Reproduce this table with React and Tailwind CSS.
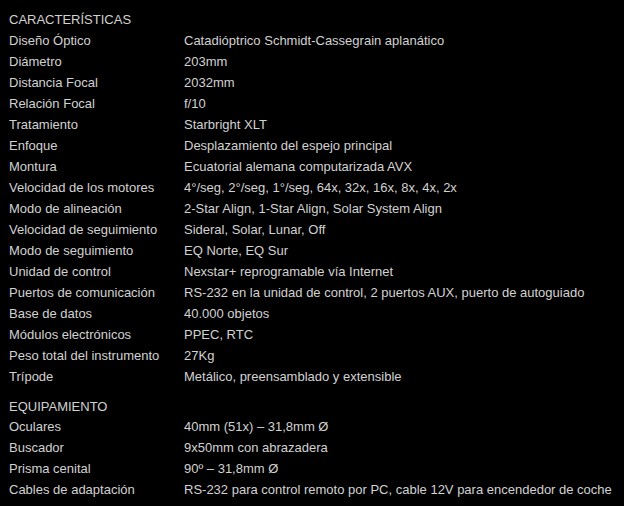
import React from 'react';

const caracteristicas = [
  ['Diseño Óptico', 'Catadióptrico Schmidt-Cassegrain aplanático'],
  ['Diámetro', '203mm'],
  ['Distancia Focal', '2032mm'],
  ['Relación Focal', 'f/10'],
  ['Tratamiento', 'Starbright XLT'],
  ['Enfoque', 'Desplazamiento del espejo principal'],
  ['Montura', 'Ecuatorial alemana computarizada AVX'],
  ['Velocidad de los motores', '4°/seg, 2°/seg, 1°/seg, 64x, 32x, 16x, 8x, 4x, 2x'],
  ['Modo de alineación', '2-Star Align, 1-Star Align, Solar System Align'],
  ['Velocidad de seguimiento', 'Sideral, Solar, Lunar, Off'],
  ['Modo de seguimiento', 'EQ Norte, EQ Sur'],
  ['Unidad de control', 'Nexstar+ reprogramable vía Internet'],
  ['Puertos de comunicación', 'RS-232 en la unidad de control, 2 puertos AUX, puerto de autoguiado'],
  ['Base de datos', '40.000 objetos'],
  ['Módulos electrónicos', 'PPEC, RTC'],
  ['Peso total del instrumento', '27Kg'],
  ['Trípode', 'Metálico, preensamblado y extensible'],
];

const equipamiento = [
  ['Oculares', '40mm (51x) – 31,8mm Ø'],
  ['Buscador', '9x50mm con abrazadera'],
  ['Prisma cenital', '90º – 31,8mm Ø'],
  ['Cables de adaptación', 'RS-232 para control remoto por PC, cable 12V para encendedor de coche'],
];

const Section = ({ title, rows, className = '', titleClass = 'h-[20px]' }) => (
  <div className={className}>
    <div className={`${titleClass} flex items-center`}>{title}</div>
    {rows.map(([k, v]) => (
      <div key={k} className="h-[21px] flex items-center">
        <span className="w-[175px] shrink-0">{k}</span>
        <span className="whitespace-nowrap">{v}</span>
      </div>
    ))}
  </div>
);

export default function App() {
  return (
    <div
      className="w-[624px] h-[506px] bg-black text-[#d2d2d2] text-[13px] leading-none pl-[9px] pt-[9px] overflow-hidden"
      style={{ fontFamily: '"Liberation Sans", Arial, sans-serif' }}
    >
      <Section title="CARACTERÍSTICAS" rows={caracteristicas} titleClass="h-[21px]" />
      <Section title="EQUIPAMIENTO" rows={equipamiento} className="mt-[9px]" />
    </div>
  );
}
